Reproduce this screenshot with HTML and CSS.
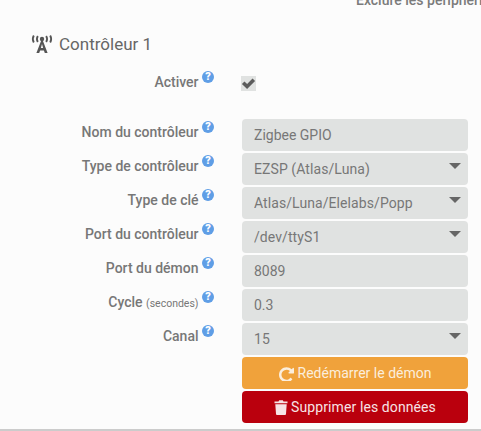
FILE: index.html
```html
<!DOCTYPE html>
<html lang="fr">
<head>
<meta charset="UTF-8" />
<title>Contrôleur 1</title>
<link rel="stylesheet" href="styles.css">
</head>
<body>

<div class="page">
  <div class="top-bar"><span>Exclure les périphériques</span></div>

  <h4 class="legend">
    <svg class="legend-icon" viewBox="0 0 24 20" width="24" height="20">
      <path d="M12 4.5 L17.6 19 H14.8 L13.9 16.4 H10.1 L9.2 19 H6.4 Z M12 10 L10.9 14 H13.1 Z" fill="#555"/>
      <circle cx="12" cy="5" r="2.2" fill="#555"/>
      <path d="M7.8 2 Q6 5 7.8 8 M16.2 2 Q18 5 16.2 8 M3.8 1.5 Q1.8 5 3.8 8.5 M20.2 1.5 Q22.2 5 20.2 8.5" fill="none" stroke="#555" stroke-width="1.8"/>
    </svg>
    Contrôleur 1
  </h4>

  <div class="row row-check">
    <label class="row-label">Activer <span class="help">?</span></label>
    <div class="row-field">
      <span class="checkbox">
        <svg viewBox="0 0 16 16" width="15" height="15"><path d="M1 8.5 L3.7 5.8 L6.5 8.6 L12.3 2.6 L15 5.3 L6.5 13.8 Z" fill="#5c5c5c"/></svg>
      </span>
    </div>
  </div>

  <form class="form">
    <div class="row">
      <label class="row-label">Nom du contrôleur <span class="help">?</span></label>
      <div class="row-field"><input class="control" type="text" value="Zigbee GPIO" disabled></div>
    </div>
    <div class="row">
      <label class="row-label">Type de contrôleur <span class="help">?</span></label>
      <div class="row-field select"><select class="control" disabled><option>EZSP (Atlas/Luna)</option></select></div>
    </div>
    <div class="row">
      <label class="row-label">Type de clé <span class="help">?</span></label>
      <div class="row-field select"><select class="control" disabled><option>Atlas/Luna/Elelabs/Popp</option></select></div>
    </div>
    <div class="row">
      <label class="row-label">Port du contrôleur <span class="help">?</span></label>
      <div class="row-field select"><select class="control" disabled><option>/dev/ttyS1</option></select></div>
    </div>
    <div class="row">
      <label class="row-label">Port du démon <span class="help">?</span></label>
      <div class="row-field"><input class="control" type="text" value="8089" disabled></div>
    </div>
    <div class="row">
      <label class="row-label">Cycle <small>(secondes)</small> <span class="help">?</span></label>
      <div class="row-field"><input class="control" type="text" value="0.3" disabled></div>
    </div>
    <div class="row">
      <label class="row-label">Canal <span class="help">?</span></label>
      <div class="row-field select"><select class="control" disabled><option>15</option></select></div>
    </div>
    <div class="row">
      <div class="row-label"></div>
      <div class="row-field">
        <button type="button" class="btn btn-warning">
          <svg viewBox="0 0 1536 1536" width="15" height="15"><path fill="#fbeedd" d="M1536 256v448q0 26-19 45t-45 19h-448q-42 0-59-40-17-39 14-69l138-138q-148-137-349-137-104 0-198.5 40.5t-163.5 109.5-109.5 163.5-40.5 198.5 40.5 198.5 109.5 163.5 163.5 109.5 198.5 40.5q119 0 225-52t179-147q7-10 23-12 15 0 25 9l137 138q9 8 9.5 20.5t-7.5 22.5q-109 132-264 204.5t-327 72.5q-156 0-298-61t-245-164-164-245-61-298 61-298 164-245 245-164 298-61q147 0 284.5 55.5t244.5 156.5l130-129q29-31 70-14 39 17 39 59z"/></svg>
          Redémarrer le démon
        </button>
      </div>
    </div>
    <div class="row">
      <div class="row-label"></div>
      <div class="row-field">
        <button type="button" class="btn btn-danger">
          <svg viewBox="0 0 14 15" width="14" height="15"><path fill="#f7e3e5" d="M0.5 1.5 H4.5 L5.2 0.3 H8.8 L9.5 1.5 H13.5 V3.2 H0.5 Z M1.3 4.2 H12.7 L12 14 Q12 15 11 15 H3 Q2 15 2 14 Z"/></svg>
          Supprimer les données
        </button>
      </div>
    </div>
  </form>
</div>

</body>
</html>
```

FILE: styles.css
```css
html, body {
  margin: 0;
  padding: 0;
  height: 100%;
}
body {
  font-family: Roboto, "Liberation Sans", sans-serif;
  font-size: 14px;
  color: #777;
  background: #fcfcfc;
  overflow: hidden;
}
.page {
  height: 429px;
  border-bottom: 2px solid #ccc;
  overflow: hidden;
}
.top-bar {
  height: 8px;
  padding-left: 356px;
  display: flex;
  align-items: flex-end;
  overflow: hidden;
  white-space: nowrap;
  font-weight: 500;
  color: #7b7b7b;
}
.legend {
  margin: 25px 0 0 30px;
  height: 22px;
  display: flex;
  align-items: center;
  gap: 5px;
  font-size: 17px;
  font-weight: 400;
  color: #666;
}
.legend-icon {
  flex-shrink: 0;
}
.row {
  display: flex;
  align-items: flex-start;
  height: 32px;
  margin-bottom: 2px;
}
.row-check {
  margin-top: 11px;
  margin-bottom: 21px;
}
.row-check .row-field {
  padding-top: 10px;
}
.row-check .row-label {
  padding-top: 6px;
}
.row-label {
  width: 214px;
  padding-top: 3px;
  line-height: 20px;
  text-align: right;
  font-weight: 500;
  color: #777;
  white-space: nowrap;
}
.row-label small {
  font-size: 10.5px;
  font-weight: 400;
}
.row-field {
  position: relative;
  width: 226px;
  margin-left: 28px;
}
.help {
  display: inline-block;
  width: 12px;
  height: 12px;
  margin-top: -6px;
  border-radius: 50%;
  background: #5f9ee6;
  color: #fff;
  font-size: 11px;
  font-weight: 900;
  line-height: 12px;
  text-align: center;
  vertical-align: 7px;
}
.checkbox {
  display: flex;
  align-items: center;
  justify-content: center;
  width: 15px;
  height: 15px;
  margin-left: -1px;
  background: #e0e2e1;
}
.control {
  display: block;
  width: 100%;
  height: 32px;
  box-sizing: border-box;
  padding: 0 12px;
  border: none;
  border-radius: 4px;
  background: #e0e2e1;
  color: #777;
  font-family: inherit;
  font-size: 14px;
  opacity: 1;
  appearance: none;
}
select.control {
  letter-spacing: 0.08px;
}
.select::after {
  content: "";
  position: absolute;
  top: 10px;
  right: 7px;
  border-left: 6px solid transparent;
  border-right: 6px solid transparent;
  border-top: 6px solid #666;
}
.btn {
  display: flex;
  align-items: center;
  justify-content: center;
  gap: 4px;
  width: 100%;
  height: 32px;
  padding: 0;
  border: none;
  border-radius: 4px;
  font-family: inherit;
  font-size: 14px;
}
.btn-warning {
  background: #f0a23b;
  color: #fbeedd;
}
.btn-danger {
  gap: 3px;
  letter-spacing: 0.1px;
  background: #ba000d;
  color: #f7e3e5;
}
```
